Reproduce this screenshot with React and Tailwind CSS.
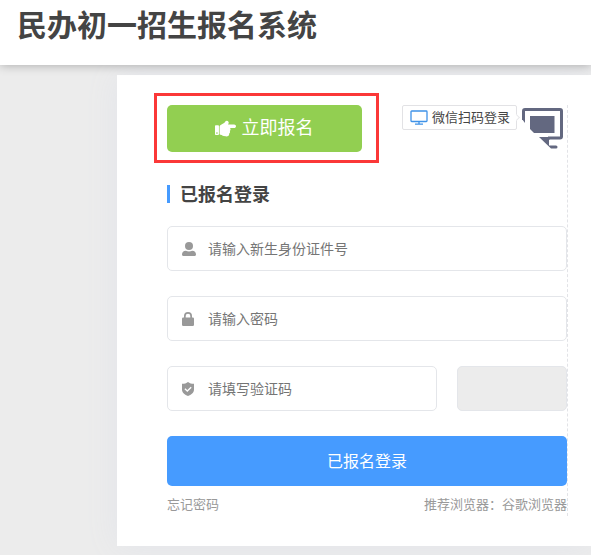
import { FaHandPointRight } from 'react-icons/fa'

const UserIcon = () => (
  <svg className="h-3.5 w-3.5" viewBox="0 0 14 14" fill="currentColor">
    <circle cx="7" cy="4" r="4" />
    <path d="M0 12.6C0 10.2 1.5 8.7 3.8 8.7C5.8 9.7 8.2 9.7 10.2 8.7C12.5 8.7 14 10.2 14 12.6C14 13.5 13.6 14 12.8 14H1.2C.4 14 0 13.5 0 12.6Z" />
  </svg>
)

const LockIcon = () => (
  <svg className="h-3.5 w-3.5" viewBox="0 0 14 14" fill="currentColor">
    <path d="M2 5.500V4a4 4 0 0 1 8 0v1.500h.8a1.200 1.200 0 0 1 1.200 1.200v6.100a1.200 1.200 0 0 1-1.200 1.200H1.200A1.200 1.200 0 0 1 0 12.800V6.700A1.200 1.200 0 0 1 1.200 5.500Zm1.700 0h4.600V4a2.300 2.300 0 0 0-4.600 0Z" fillRule="evenodd" />
  </svg>
)

const ShieldIcon = () => (
  <svg className="h-3.5 w-3.5" viewBox="0 0 14 14">
    <path d="M6 0C7.600 1.300 9.500 1.800 12 1.800V7.500C12 10.800 9.200 12.800 6 14C2.800 12.800 0 10.800 0 7.500V1.800C2.500 1.800 4.400 1.300 6 0Z" fill="currentColor" />
    <path d="M2.900 6.700L5.300 9L9.200 5.200" fill="none" stroke="#fff" strokeWidth="1.300" />
  </svg>
)

const MonitorIcon = () => (
  <svg className="h-[15px] w-[18px]" viewBox="0 0 18 15" fill="none" stroke="#3f92e8">
    <rect x="1" y="1" width="16" height="10.500" rx=".7" strokeWidth="1.300" />
    <path d="M9 11.500V14M5 14.100H13" strokeWidth="1.300" />
  </svg>
)

const ScanCorner = () => (
  <svg className="h-[46px] w-[43px]" viewBox="0 0 43 46" fill="#636880">
    <path d="M1.500 15V6Q1.500 4.500 3 4.500H38Q39.500 4.500 39.500 6V31.500Q39.500 33 38 33H26" fill="none" stroke="#636880" strokeWidth="3" />
    <path d="M0 14H3V18Z" />
    <path d="M8 11H32.500V28H12L8 24Z" />
    <path d="M17 32H28V34.500H27V40.500H34Q35.500 40.500 35.500 42T34 43.500H29Z" />
  </svg>
)

const Field = ({ icon, placeholder, className = '' }) => (
  <label className={`flex h-[45px] items-center rounded-[5px] border border-[#e4e6ea] bg-white pl-3.5 text-[#999] ${className}`}>
    {icon}
    <input
      className="ml-3 min-w-0 flex-1 bg-transparent pb-0.5 text-sm text-[#757575] outline-none placeholder:text-[#757575]"
      placeholder={placeholder}
    />
  </label>
)

const App = () => {
  return (
    <div className="flex h-[555px] w-full flex-col overflow-hidden bg-[#ececec] font-['Noto_Sans_CJK_SC',sans-serif] text-[#444]">
      <header className="relative z-10 h-[65px] shrink-0 bg-white pl-[17px] shadow-[0_0_10px_rgba(0,0,0,0.3)]">
        <h1 className="text-[30px] leading-[46px] font-bold">民办初一招生报名系统</h1>
      </header>

      <main className="mt-2.5 ml-[117px] h-[471px] bg-white pt-[30px] pl-[50px] shadow-[0_0_30px_#e2e4ea]">
        <div className="h-[411px] w-[401px] border-r border-dashed border-[#e2e3e7]">
          {/* Sign up and QR login */}
          <div className="flex h-[47px] items-start justify-between">
            <div className="relative">
              <button className="flex h-[47px] w-[195px] items-center justify-center gap-1.5 rounded-[5px] bg-[#92cf51] pr-px text-lg text-white">
                <FaHandPointRight className="h-[21px] w-[21px]" />
                <span className="pb-[5px]">立即报名</span>
              </button>
              <div className="pointer-events-none absolute -top-3 -left-[13px] h-[70px] w-[225px] border-3 border-[#fb3838]"></div>
            </div>
            <div className="flex items-start">
              <div className="relative flex h-[25px] w-[115px] items-center gap-1 rounded-xs border border-[#e2e2e5] pl-[7px] text-[13px] whitespace-nowrap">
                <MonitorIcon />
                <span className="pb-0.5">微信扫码登录</span>
                <span className="absolute top-[9px] -right-[3px] h-[5px] w-[5px] rotate-45 border-t border-r border-[#e9e9eb] bg-white"></span>
              </div>
              <div className="mr-[2px] ml-[5px]">
                <ScanCorner />
              </div>
            </div>
          </div>

          {/* Login form */}
          <div className="mt-[33px] flex h-[18px] items-center border-l-3 border-[#469bff] pl-2.5">
            <h2 className="pb-[3px] text-lg leading-[18px] font-bold">已报名登录</h2>
          </div>
          <form className="mt-[23px]">
            <Field icon={<UserIcon />} placeholder="请输入新生身份证件号" />
            <Field icon={<LockIcon />} placeholder="请输入密码" className="mt-[25px]" />
            <div className="mt-[25px] flex gap-5">
              <Field icon={<ShieldIcon />} placeholder="请填写验证码" className="w-[270px]" />
              <div className="h-[45px] w-[110px] rounded-[5px] border border-[#e4e6ea] bg-[#ececec]"></div>
            </div>
            <button type="button" className="mt-[25px] block h-[50px] w-full rounded-[5px] bg-[#469bff] pb-[3px] text-base text-white">
              已报名登录
            </button>
          </form>
          <div className="mt-2 flex justify-between text-[13px] leading-5 text-[#999]">
            <a>忘记密码</a>
            <span>推荐浏览器：谷歌浏览器</span>
          </div>
        </div>
      </main>
    </div>
  )
}

export default App
